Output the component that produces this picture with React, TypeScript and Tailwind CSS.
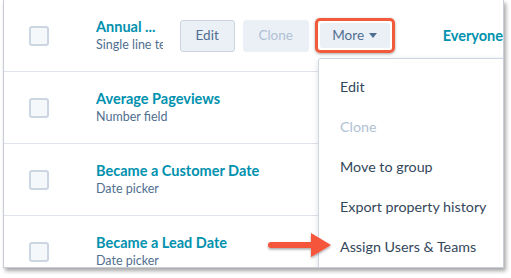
import React from 'react';

const font = { fontFamily: 'Lato, "Open Sans", sans-serif' };

const rows = [
  { name: 'Annual ...', type: 'Single line text', hovered: true },
  { name: 'Average Pageviews', type: 'Number field' },
  { name: 'Became a Customer Date', type: 'Date picker' },
  { name: 'Became a Lead Date', type: 'Date picker' },
];

const menu = [
  { label: 'Edit' },
  { label: 'Clone', disabled: true },
  { label: 'Move to group' },
  { label: 'Export property history' },
  { label: 'Assign Users & Teams' },
];

function Checkbox() {
  return <div className="h-[20px] w-[20px] shrink-0 rounded-[3px] border-2 border-[#cbd6e2] bg-[#f5f8fa]" />;
}

function Row({ name, type, hovered }: { name: string; type: string; hovered?: boolean }) {
  return (
    <div className="flex h-[72px] shrink-0 items-center border-b border-[#dfe3eb] pl-[25px]">
      <Checkbox />
      <div className={`ml-[47px] flex flex-col ${hovered ? 'w-[68px] overflow-hidden' : ''}`}>
        <span className="whitespace-nowrap text-[14.5px] font-bold leading-[18px] text-[#0091ae]">{name}</span>
        <span className="whitespace-nowrap text-[12.5px] leading-[17px] text-[#516f90]">{type}</span>
      </div>
      {hovered && (
        <div className="ml-[17px] flex items-center">
          <button className="h-[32px] w-[55px] rounded-[3px] border border-[#cbd6e2] bg-[#eaf0f6] text-[13.5px] text-[#506e91]">
            Edit
          </button>
          <button className="ml-[8px] h-[32px] w-[66px] rounded-[3px] border border-[#eaf0f6] bg-[#eaf0f6] text-[13.5px] text-[#b0c1d4]">
            Clone
          </button>
          <div className="ml-[6px] rounded-[5px] border-[3px] border-[#f25a3c] p-[2px] shadow-[0_1px_3px_rgba(0,0,0,0.35)]">
            <button className="flex h-[25px] w-[70px] items-center justify-center gap-[5px] rounded-[2px] bg-[#eaf0f6] text-[13.5px] text-[#506e91]">
              More
              <svg width="8" height="5" viewBox="0 0 8 5">
                <path d="M0 0h8L4 5z" fill="#506e91" />
              </svg>
            </button>
          </div>
          <span className="ml-[48px] whitespace-nowrap text-[14.5px] font-bold text-[#0091ae]">Everyone</span>
        </div>
      )}
    </div>
  );
}

export default function App() {
  return (
    <div className="h-[278px] w-[511px] overflow-hidden bg-white" style={font}>
      <div className="relative ml-[3px] h-[268px] w-[501px] overflow-hidden border-l border-r border-b border-[#c9ced6] bg-white shadow-[2px_3px_4px_rgba(0,0,0,0.35)]">
        <div className="flex flex-col">
          {rows.map((r) => (
            <Row key={r.name} {...r} />
          ))}
        </div>

        {/* dropdown menu */}
        <div className="absolute left-[314px] top-[58px] w-[200px] rounded-[3px] border border-[#cbd6e2] bg-white py-[8px] shadow-[0_2px_6px_rgba(0,0,0,0.12)]">
          {menu.map((m) => (
            <div
              key={m.label}
              className={`h-[40px] whitespace-nowrap px-[21px] text-[14.3px] leading-[40px] ${m.disabled ? 'text-[#b0c1d4]' : 'text-[#33475b]'}`}
            >
              {m.label}
            </div>
          ))}
        </div>

        {/* annotation arrow */}
        <svg className="absolute left-[261px] top-[230px]" width="70" height="30" viewBox="0 0 70 30">
          <defs>
            <filter id="sh" x="-20%" y="-40%" width="140%" height="180%">
              <feDropShadow dx="0" dy="1.5" stdDeviation="1.2" floodColor="#000" floodOpacity="0.35" />
            </filter>
          </defs>
          <g filter="url(#sh)">
            <path d="M6 12h40V3l20 12-20 12v-9H6a3 3 0 0 1 0-6z" fill="#f4553b" />
          </g>
        </svg>
      </div>
    </div>
  );
}
